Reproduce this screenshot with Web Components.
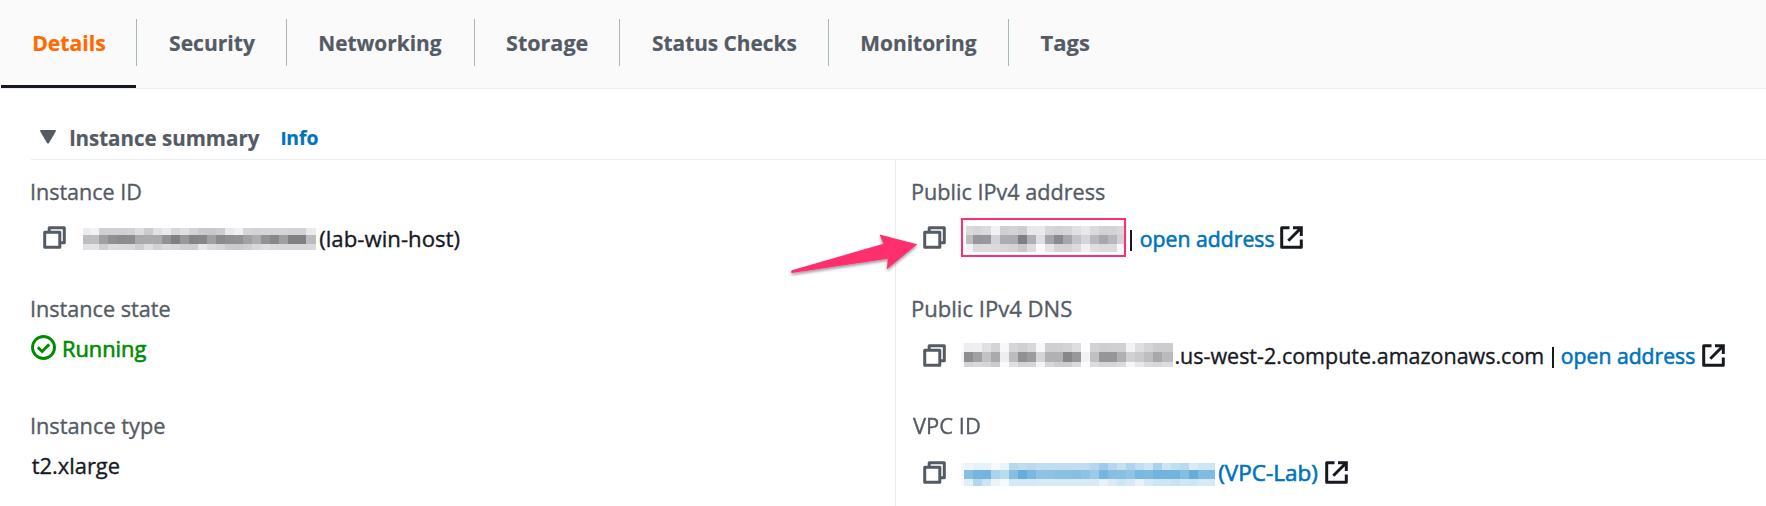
<!DOCTYPE html>
<html lang="en"><head><meta charset="utf-8"><title>Instance details</title>
<style>
body{margin:0;background:#fff;font-family:"Open Sans","Noto Sans",sans-serif;font-size:22px;color:#16191f}
</style></head><body>
<instance-details></instance-details>
<script>
const define=(name,html,init)=>{
  const t=document.createElement('template');t.innerHTML=html;
  customElements.define(name,class extends HTMLElement{
    connectedCallback(){
      if(this.shadowRoot)return;
      this.attachShadow({mode:'open'}).append(t.content.cloneNode(true));
      if(init)init.call(this,this.shadowRoot);
    }
  });
};

/* A single line of text whose glyphs fill exactly the given width.
   With "initial", the first letter is set in a face whose bold I has no serifs. */
define('fit-text',`<style>
:host{display:block;flex:none;white-space:nowrap;height:30px;line-height:30px;-webkit-text-stroke:var(--stroke,.35px) currentColor}
span{display:inline-block;transform-origin:0 0}
:host([initial]) span::first-letter{font-family:Roboto,sans-serif}
</style><span></span>`,function(root){
  const w=+this.getAttribute('w'),cs=getComputedStyle(this),text=this.textContent.trim();
  const span=root.querySelector('span');span.textContent=text;
  const c=document.createElement('canvas').getContext('2d');
  const size=parseFloat(cs.fontSize);
  const measure=(s,family)=>{c.font=`${cs.fontWeight} ${size*10}px ${family}`;return c.measureText(s)};
  let left,right;
  if(this.hasAttribute('initial')){
    const a=measure(text[0],'Roboto');left=a.actualBoundingBoxLeft/10;
    right=a.width/10+measure(text.slice(1),cs.fontFamily).actualBoundingBoxRight/10;
  }else{
    const m=measure(text,cs.fontFamily);left=m.actualBoundingBoxLeft/10;right=m.actualBoundingBoxRight/10;
  }
  const s=w/(right+left);
  this.style.width=w+'px';
  span.style.transform=`translateX(${left*s}px) scaleX(${s})`;
});

define('copy-icon',`<style>:host{display:block;flex:none;width:23px;height:23px}svg{display:block}</style>
<svg width="23" height="23" fill="none" stroke="#545b64" stroke-width="3" stroke-linejoin="round"><path d="M6.2 6V1.7h15.1v15.1H17"/><path d="M1.7 6.2h15.1v15.1H1.7z"/></svg>`);

define('external-icon',`<style>:host{display:block;flex:none;width:23px;height:23px}svg{display:block}</style>
<svg width="23" height="23" fill="none" stroke="#16191f" stroke-width="3" stroke-linejoin="round"><path d="M9.5 1.7H1.7v19.6h19.6v-7.8"/><path d="M13 1.7h8.3V10M21 2 8.3 14.7" stroke-linejoin="miter"/></svg>`);

define('check-icon',`<style>:host{display:block;flex:none;width:25px;height:25px}svg{display:block}</style>
<svg width="25" height="25" fill="none" stroke="#008a00" stroke-width="2.9"><circle cx="12.5" cy="12.5" r="11"/><path d="m6.8 12.3 4.3 4.2 7.1-7.1"/></svg>`);

/* Redacted value: three rows of coloured cells, first column may be narrower. */
define('pixel-mask',`<style>:host{display:block;flex:none}svg{display:block}</style><svg shape-rendering="crispEdges"></svg>`,function(root){
  const first=+this.getAttribute('first'),hs=this.getAttribute('heights').split(' ').map(Number);
  const rows=this.getAttribute('cells').split('/').map(r=>r.trim().split(' '));
  const W=+this.getAttribute('w'),svg=root.querySelector('svg'),blue=this.hasAttribute('blue');
  svg.setAttribute('width',W);svg.setAttribute('height',hs.reduce((a,b)=>a+b));
  let y=0,out='';
  rows.forEach((r,j)=>{r.forEach((v,i)=>{
    const x=i?first+9*(i-1):0,w=i==r.length-1?W-x:(i?9:first),n=parseInt(v,16);
    const f=blue?`rgb(${n},${Math.round(255-(255-n)*.53)},${Math.round(255-(255-n)*.24)})`:`rgb(${n},${n},${Math.min(255,n+2)})`;
    out+=`<rect x="${x}" y="${y}" width="${w}" height="${hs[j]}" fill="${f}"/>`;
  });y+=hs[j]});
  svg.innerHTML=out;
});

define('tab-item',`<style>
:host{display:flex;position:relative;box-sizing:border-box;height:88px;padding:27px 0 0;color:#545b64;font-weight:700;flex:none;--stroke:.2px}
:host::after{content:"";position:absolute;right:0;top:19px;width:1px;height:47px;background:#aab7b8}
:host([last])::after{display:none}
:host([active]){color:#ff6a00}
:host([active])::before{content:"";position:absolute;left:1px;right:1px;bottom:0;height:3px;background:#16191f}
</style><slot></slot>`,function(){
  this.style.width=this.getAttribute('width')+'px';
  this.style.paddingLeft=this.getAttribute('pad')+'px';
});

define('tab-bar',`<style>:host{display:flex;height:88px;background:#fafafa;border-bottom:1px solid #eaeded}</style><slot></slot>`);

define('section-header',`<style>
:host{display:flex;height:71px;box-sizing:border-box;margin-left:31px;padding:33px 0 0 9px;border-bottom:1px solid #eaeded;color:#545b64;font-weight:700;--stroke:.2px}
svg{margin:8px 15px 0 0;flex:none}
</style><svg width="16" height="14"><path d="M1 0h14q1.4.3.6 1.7L9 13q-1 1.2-2 0L.4 1.7Q-.4.3 1 0z" fill="#545b64"/></svg><slot></slot>`);

define('detail-field',`<style>
:host{display:block;height:117px}
.label{display:flex;height:30px;color:#545b64}
.value{display:flex;align-items:flex-start}
</style><div class="label"><slot name="label"></slot></div><div class="value"><slot></slot></div>`);

define('pointer-arrow',`<style>:host{display:block;position:absolute;left:785px;top:228px}svg{display:block}</style>
<svg width="140" height="54"><defs><filter id="s" x="-10%" y="-20%" width="120%" height="150%"><feDropShadow dx="0" dy="2" stdDeviation="1.5" flood-color="#000" flood-opacity=".4"/></filter></defs>
<path filter="url(#s)" fill="#ff2f6d" d="M132.3 16.3 94.5 6.6 98.5 15.8 6.8 42.2q-1.4 2 0 2.8L102.8 30.8 101.9 41.3z"/></svg>`);

define('instance-details',`<style>
:host{display:block;position:relative;width:1766px;height:506px;overflow:hidden;background:#fff}
.cols{display:grid;grid-template-columns:895px 1fr;height:346px}
.col{padding:16px 0 0 32px}
.right{border-left:1px solid #eaeded;padding-left:17px}
.icon{margin-top:20px}
.low{margin-top:21px}
.line{margin-top:17px}
.link{color:#0073bb}
.strong{--stroke:.6px}
.pipe{width:2px;height:21px;background:#16191f;flex:none}
.info{font-size:19px;color:#0073bb;margin:1px 0 0 22.5px}
.box{box-sizing:border-box;width:165px;height:39px;border:2px solid #ff2f6d;padding:6px 0 0 3px;flex:none}
</style>
<tab-bar>
<tab-item active width="137" pad="33.5"><fit-text w="71">Details</fit-text></tab-item>
<tab-item width="150" pad="32.5"><fit-text w="85">Security</fit-text></tab-item>
<tab-item width="188" pad="33"><fit-text w="121.3">Networking</fit-text></tab-item>
<tab-item width="145" pad="32"><fit-text w="80.4">Storage</fit-text></tab-item>
<tab-item width="209" pad="32.7"><fit-text w="143">Status Checks</fit-text></tab-item>
<tab-item width="180" pad="32.7"><fit-text w="114.4">Monitoring</fit-text></tab-item>
<tab-item last width="100" pad="32"><fit-text w="48">Tags</fit-text></tab-item>
</tab-bar>
<section-header><fit-text initial w="188.5">Instance summary</fit-text><fit-text initial class="info" w="35.6">Info</fit-text></section-header>
<div class="cols">
<div class="col">
<detail-field><fit-text slot="label" w="108.7">Instance ID</fit-text>
<copy-icon class="icon" style="margin-left:11px"></copy-icon>
<pixel-mask style="margin:22px 4px 0 17px" w="233" first="7" heights="7 9 6" cells="EC F2 D0 D0 D0 D1 DD CC E1 EA D7 DF D3 CA C8 CD E9 F1 D5 D3 D5 D4 D5 D2 D3 EB/BD BF A0 90 8B 8D AA AB AB 93 80 98 84 87 A0 8B 90 92 A1 AE 93 88 9F 80 80 BC/E2 E3 CF DC DA D9 CE DE D2 DB D8 D0 CE E8 DB D6 CC CB CF D8 DF DA D8 D7 D8 D9"></pixel-mask>
<fit-text class="line" w="139.3">(lab-win-host)</fit-text></detail-field>
<detail-field><fit-text slot="label" w="137.7">Instance state</fit-text>
<check-icon style="margin:12px 7.5px 0 -1px"></check-icon><fit-text class="strong" style="margin-top:10px;color:#008a00" w="82">Running</fit-text></detail-field>
<detail-field><fit-text slot="label" w="132.5">Instance type</fit-text>
<fit-text style="margin-top:10px" w="87">t2.xlarge</fit-text></detail-field>
</div>
<div class="col right">
<detail-field><fit-text slot="label" w="191.4">Public IPv4 address</fit-text>
<copy-icon class="icon" style="margin-left:10px"></copy-icon>
<div class="box" style="margin:12px 4px 0 15px"><pixel-mask w="158" first="7" heights="9 9 8" cells="D9 D6 DB F2 CF D3 CD E8 E9 D6 D2 D6 E0 E8 DA D2 D3 D8/BE 97 99 D3 AD AC 80 B0 DF A6 8B A7 C4 D6 BA A8 B8 D2/F2 DB DC DA D7 D4 C9 DD FA E5 D4 D3 DB F1 DF DC DC F8"></pixel-mask></div>
<div class="pipe" style="margin-top:24px"></div>
<fit-text class="line link strong" style="margin-left:8.8px" w="132.6">open address</fit-text>
<external-icon class="icon" style="margin-left:6.6px"></external-icon></detail-field>
<detail-field><fit-text slot="label" w="158.4">Public IPv4 DNS</fit-text>
<copy-icon class="low" style="margin-left:10px"></copy-icon>
<pixel-mask style="margin:20px 3px 0 15px" w="212" first="3" heights="9 10 5" cells="FC EE EF E0 D4 F8 D6 D0 D8 F8 CF CF D3 DE FD D2 CE D0 D0 F2 DF D5 CC CC/F4 8E A0 C2 AA EE BC 91 9B D4 B1 B1 87 98 F2 C0 96 96 B0 D0 CA BE A8 BA/FC D4 D8 D5 CC FA DF D4 D5 F4 D6 CE CD DA FC DC D5 D6 DA F6 E8 DA D6 DC"></pixel-mask>
<fit-text class="line" w="366.5">.us-west-2.compute.amazonaws.com</fit-text>
<div class="pipe" style="margin:24px 0 0 9px"></div>
<fit-text class="line link strong" style="margin-left:8.5px" w="132.3">open address</fit-text>
<external-icon class="low" style="margin-left:8px"></external-icon></detail-field>
<detail-field><fit-text slot="label" w="66.6">VPC ID</fit-text>
<copy-icon class="low" style="margin-left:10px"></copy-icon>
<pixel-mask blue style="margin:23px 4.3px 0 15px" w="254" first="3" heights="7 9 7" cells="F4 EC E6 E6 F4 EA B5 BE B8 C0 C0 C0 C0 C0 C0 B4 9E B4 C4 AE C0 CE AA CC C0 B8 DA CE/F4 86 76 72 AC BA 84 66 7A 8E 8E 8A 8A 86 8E 9C 76 86 88 90 78 7C 72 70 72 84 66 80/F8 E0 B4 CC EA F4 D4 D4 D4 D6 D6 D6 D6 D6 D6 D6 E8 DA CE D6 E8 D8 CC CC C8 D0 CE D6"></pixel-mask>
<fit-text class="line link strong" w="98">(VPC-Lab)</fit-text>
<external-icon class="low" style="margin-left:8px"></external-icon></detail-field>
</div>
</div>
<pointer-arrow></pointer-arrow>`);
</script>
</body></html>
